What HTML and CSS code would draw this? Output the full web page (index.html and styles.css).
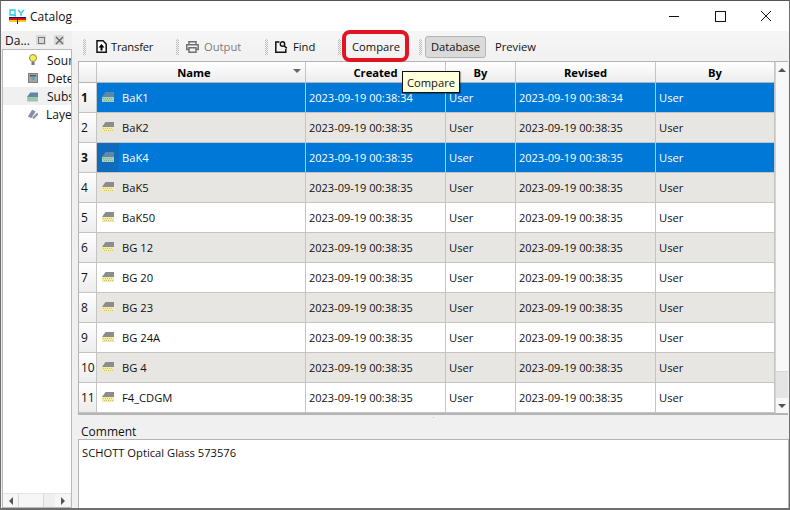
FILE: index.html
```html
<!DOCTYPE html>
<html lang="en">

<head>
    <meta charset="UTF-8">
    <meta name="viewport" content="width=device-width, initial-scale=1.0">
    <title>Catalog</title>
    <link rel="stylesheet" href="styles.css">
</head>

<body>
    <svg class="defs" width="0" height="0">
        <symbol id="glass" viewBox="0 0 12 11">
            <path d="M0 6l3.500-5h8.500v5z" fill="#8c8c8c" />
            <rect x="0" y="6" width="12" height="5" fill="#f3eda6" />
            <path d="M1 7.500h10M2 9.500h9" stroke="#c9c27a" stroke-dasharray="1 1" />
        </symbol>
        <symbol id="glass-sel" viewBox="0 0 12 11">
            <path d="M0 6l3.500-5h8.500v5z" fill="#5f87a6" />
            <rect x="0" y="6" width="12" height="5" fill="#a5cdb8" />
            <path d="M1 7.500h10M2 9.500h9" stroke="#7fae98" stroke-dasharray="1 1" />
        </symbol>
    </svg>

    <div class="window">
        <div class="titlebar">
            <svg class="app-icon" width="17" height="15" viewBox="0 0 17 15">
                <path d="M1 1h5v5H1zM5 6l2 1M9 1l3 3 3-3M12 4v3" fill="none" stroke="#25d0e6" stroke-width="1.400" />
                <rect x="0" y="8" width="17" height="1" fill="#10107a" />
                <rect x="0" y="9" width="17" height="2" fill="#e01010" />
                <rect x="0" y="11" width="17" height="2" fill="#f0d010" />
                <rect x="8" y="8" width="1" height="7" fill="#222" />
            </svg>
            <span class="title">Catalog</span>
            <div class="win-buttons">
                <svg width="46" height="30" viewBox="0 0 46 30"><path d="M18 15.500h10" stroke="#111" /></svg>
                <svg width="46" height="30" viewBox="0 0 46 30"><rect x="18.500" y="10.500" width="10" height="10" fill="none" stroke="#111" /></svg>
                <svg width="46" height="30" viewBox="0 0 46 30"><path d="M18 10l10 10M28 10L18 20" stroke="#111" /></svg>
            </div>
        </div>

        <div class="main">
            <div class="dock">
                <div class="dock-head">
                    <span>Da...</span>
                    <i class="dock-btn"><svg width="9" height="9" viewBox="0 0 9 9"><rect x="1.500" y="1.500" width="6" height="6" fill="none" stroke="#777" /></svg></i>
                    <i class="dock-btn"><svg width="9" height="9" viewBox="0 0 9 9"><path d="M1 1l7 7M8 1L1 8" stroke="#666" stroke-width="1.300" /></svg></i>
                </div>
                <div class="tree">
                    <div class="tree-list">
                        <div class="tree-item">
                            <svg width="12" height="14" viewBox="0 0 12 14"><circle cx="6" cy="5" r="3.500" fill="#f5ef5a" stroke="#8c8c50" /><rect x="4.500" y="9" width="3" height="3" fill="#777" /></svg>
                            <span>Sour</span>
                        </div>
                        <div class="tree-item">
                            <svg width="12" height="14" viewBox="0 0 12 14"><rect x="1.500" y="2.500" width="9" height="9" fill="#a4a4a4" stroke="#808080" /><rect x="3" y="4" width="6" height="1.500" fill="#555" /><circle cx="6" cy="7.500" r="1.800" fill="#4fa6c0" /></svg>
                            <span>Dete</span>
                        </div>
                        <div class="tree-item active">
                            <svg width="11" height="11"><use href="#glass-sel" /></svg>
                            <span>Subs</span>
                        </div>
                        <div class="tree-item layer">
                            <svg width="12" height="14" viewBox="0 0 14 14"><path d="M1 10l5-8 4 2-5 8z" fill="#8a8ab0" /><path d="M6 11l6-6 1 3-5 5z" fill="#999" /></svg>
                            <span>Laye</span>
                        </div>
                    </div>
                    <div class="hscroll">
                        <i class="arrow-left"></i>
                        <i class="hthumb"></i>
                        <i class="arrow-right"></i>
                    </div>
                </div>
            </div>

            <div class="content">
                <div class="toolbar">
                    <span class="grip"></span>
                    <div class="tool tool-transfer">
                        <svg width="11" height="13" viewBox="0 0 11 13"><path d="M1 .800h6l3.200 3.200v8.200H1z" fill="#fff" stroke="#111" stroke-width="1.500" /><path d="M5.500 4l3 3.500h-2v3h-2v-3h-2z" fill="#000" /></svg>
                        <span>Transfer</span>
                    </div>
                    <span class="grip"></span>
                    <div class="tool tool-output disabled">
                        <svg width="13" height="12" viewBox="0 0 13 12"><path d="M3 3.500V.800h7v2.700M3 8.500H.800V3.800h11.400v4.700H10M3 6.700h7v4.500H3z" fill="none" stroke="#707070" stroke-width="1.500" /></svg>
                        <span>Output</span>
                    </div>
                    <span class="grip"></span>
                    <div class="tool tool-find">
                        <svg width="13" height="12" viewBox="0 0 13 12"><path d="M4.500 1H.800v10.200h10V8" fill="none" stroke="#111" stroke-width="1.500" /><circle cx="7.500" cy="3" r="2.200" fill="none" stroke="#111" stroke-width="1.400" /><path d="M9.200 4.800l2.600 2.600" stroke="#111" stroke-width="1.500" /></svg>
                        <span>Find</span>
                    </div>
                    <span class="grip"></span>
                    <div class="tool tool-compare">Compare</div>
                    <span class="grip"></span>
                    <div class="tab checked">Database</div>
                    <div class="tab">Preview</div>
                </div>

                <div class="table-wrap">
                    <div class="table">
                        <div class="thead">
                            <div class="corner"></div>
                            <div class="th th-name">Name<i class="sort"></i></div>
                            <div class="th">Created</div>
                            <div class="th">By</div>
                            <div class="th">Revised</div>
                            <div class="th">By</div>
                        </div>
                        <div class="row selected">
                            <div class="num">1</div>
                            <div class="cell name"><svg width="12" height="11"><use href="#glass-sel" /></svg>BaK1</div>
                            <div class="cell date">2023-09-19 00:38:34</div>
                            <div class="cell">User</div>
                            <div class="cell date">2023-09-19 00:38:34</div>
                            <div class="cell">User</div>
                        </div>
                        <div class="row alt">
                            <div class="num">2</div>
                            <div class="cell name"><svg width="12" height="11"><use href="#glass" /></svg>BaK2</div>
                            <div class="cell date">2023-09-19 00:38:35</div>
                            <div class="cell">User</div>
                            <div class="cell date">2023-09-19 00:38:35</div>
                            <div class="cell">User</div>
                        </div>
                        <div class="row selected current">
                            <div class="num">3</div>
                            <div class="cell name"><svg width="12" height="11"><use href="#glass-sel" /></svg>BaK4</div>
                            <div class="cell date">2023-09-19 00:38:35</div>
                            <div class="cell">User</div>
                            <div class="cell date">2023-09-19 00:38:35</div>
                            <div class="cell">User</div>
                        </div>
                        <div class="row alt">
                            <div class="num">4</div>
                            <div class="cell name"><svg width="12" height="11"><use href="#glass" /></svg>BaK5</div>
                            <div class="cell date">2023-09-19 00:38:35</div>
                            <div class="cell">User</div>
                            <div class="cell date">2023-09-19 00:38:35</div>
                            <div class="cell">User</div>
                        </div>
                        <div class="row">
                            <div class="num">5</div>
                            <div class="cell name"><svg width="12" height="11"><use href="#glass" /></svg>BaK50</div>
                            <div class="cell date">2023-09-19 00:38:35</div>
                            <div class="cell">User</div>
                            <div class="cell date">2023-09-19 00:38:35</div>
                            <div class="cell">User</div>
                        </div>
                        <div class="row alt">
                            <div class="num">6</div>
                            <div class="cell name"><svg width="12" height="11"><use href="#glass" /></svg>BG 12</div>
                            <div class="cell date">2023-09-19 00:38:35</div>
                            <div class="cell">User</div>
                            <div class="cell date">2023-09-19 00:38:35</div>
                            <div class="cell">User</div>
                        </div>
                        <div class="row">
                            <div class="num">7</div>
                            <div class="cell name"><svg width="12" height="11"><use href="#glass" /></svg>BG 20</div>
                            <div class="cell date">2023-09-19 00:38:35</div>
                            <div class="cell">User</div>
                            <div class="cell date">2023-09-19 00:38:35</div>
                            <div class="cell">User</div>
                        </div>
                        <div class="row alt">
                            <div class="num">8</div>
                            <div class="cell name"><svg width="12" height="11"><use href="#glass" /></svg>BG 23</div>
                            <div class="cell date">2023-09-19 00:38:35</div>
                            <div class="cell">User</div>
                            <div class="cell date">2023-09-19 00:38:35</div>
                            <div class="cell">User</div>
                        </div>
                        <div class="row">
                            <div class="num">9</div>
                            <div class="cell name"><svg width="12" height="11"><use href="#glass" /></svg>BG 24A</div>
                            <div class="cell date">2023-09-19 00:38:35</div>
                            <div class="cell">User</div>
                            <div class="cell date">2023-09-19 00:38:35</div>
                            <div class="cell">User</div>
                        </div>
                        <div class="row alt">
                            <div class="num">10</div>
                            <div class="cell name"><svg width="12" height="11"><use href="#glass" /></svg>BG 4</div>
                            <div class="cell date">2023-09-19 00:38:35</div>
                            <div class="cell">User</div>
                            <div class="cell date">2023-09-19 00:38:35</div>
                            <div class="cell">User</div>
                        </div>
                        <div class="row">
                            <div class="num">11</div>
                            <div class="cell name"><svg width="12" height="11"><use href="#glass" /></svg>F4_CDGM</div>
                            <div class="cell date">2023-09-19 00:38:35</div>
                            <div class="cell">User</div>
                            <div class="cell date">2023-09-19 00:38:35</div>
                            <div class="cell">User</div>
                        </div>
                    </div>
                    <div class="vscroll">
                        <i class="arrow-btn"><b class="arrow-up"></b></i>
                        <i class="vthumb"></i>
                        <i class="arrow-btn"><b class="arrow-down"></b></i>
                    </div>
                </div>

                <div class="splitter"></div>

                <div class="comment-label">Comment</div>
                <div class="comment-box">SCHOTT Optical Glass 573576</div>
            </div>
        </div>

        <div class="highlight"></div>
        <div class="tooltip">Compare</div>
    </div>
</body>

</html>
```
FILE: styles.css
```css
* {
    box-sizing: border-box;
}

html,
body {
    margin: 0;
    height: 100%;
    overflow: hidden;
}

body {
    font-family: 'Open Sans', 'Noto Sans', sans-serif;
    font-size: 11.2px;
    color: #111;
}

.defs {
    position: absolute;
}

.window {
    position: relative;
    width: 790px;
    height: 510px;
    background: #f0f0f0;
    border: 1px solid #6e6e6e;
    border-top-color: #555;
    border-bottom-width: 2px;
    display: flex;
    flex-direction: column;
}

/* Title bar */
.titlebar {
    height: 30px;
    flex: none;
    background: #fff;
    display: flex;
    align-items: center;
    padding-left: 8px;
}

.app-icon {
    margin-right: 4px;
}

.title {
    font-size: 12px;
}

.win-buttons {
    margin-left: auto;
    display: flex;
}

.main {
    flex: 1;
    display: flex;
    min-height: 0;
}

/* Left dock */
.dock {
    width: 71px;
    flex: none;
    display: flex;
    flex-direction: column;
}

.dock-head {
    height: 18px;
    display: flex;
    align-items: center;
    padding-left: 4px;
    font-size: 12px;
}

.dock-head span {
    width: 32px;
}

.dock-btn {
    width: 10px;
    height: 10px;
    margin-right: 8px;
    background: #d9d9d9;
    display: flex;
    align-items: center;
    justify-content: center;
}

.tree {
    flex: 1;
    margin-left: 1px;
    background: #fff;
    border: 1px solid #b9b9b9;
    display: flex;
    flex-direction: column;
    font-size: 12px;
}

.tree-list {
    flex: 1;
    padding-top: 1px;
    overflow: hidden;
}

.tree-item {
    height: 18px;
    display: flex;
    align-items: center;
    padding-left: 24px;
    gap: 8px;
    white-space: nowrap;
}

.tree-item svg {
    flex: none;
}

.tree-item.active {
    background: #f0f0f0;
    gap: 9px;
}

.tree-item.layer {
    gap: 7px;
}

.hscroll {
    height: 14px;
    display: flex;
    background: #efefef;
    border-top: 1px solid #e4e4e4;
}

.hscroll i {
    display: block;
}

.arrow-left,
.arrow-right {
    width: 15px;
    height: 13px;
    position: relative;
    background: #f6f6f6;
}

.arrow-left::after,
.arrow-right::after {
    content: "";
    position: absolute;
    top: 3px;
    border: 4px solid transparent;
}

.arrow-left::after {
    left: 2px;
    border-right-color: #555;
}

.arrow-right::after {
    left: 6px;
    border-left-color: #555;
}

.hthumb {
    width: 26px;
    background: #f6f6f6;
    border-right: 1px solid #d8d8d8;
    border-left: 1px solid #d8d8d8;
    margin-right: 11px;
}

/* Right side */
.content {
    flex: 1;
    min-width: 0;
    display: flex;
    flex-direction: column;
    background: #f0f0f0;
    padding-left: 6px;
}

.toolbar {
    height: 30px;
    margin-left: -6px;
    display: flex;
    align-items: center;
    background: linear-gradient(#f6f6f6, #f1f1f1);
    padding: 1px 0 0 11px;
}

.grip {
    width: 3px;
    height: 16px;
    flex: none;
    background: repeating-conic-gradient(#bdbdbd 0 25%, transparent 0 50%) 0 0 / 2px 2px;
}

.tool {
    display: flex;
    align-items: center;
    height: 24px;
    padding-left: 7px;
    white-space: nowrap;
    flex: none;
}

.tool svg {
    margin-right: 5px;
}

.tool.disabled {
    color: #7d7d7d;
}

.tool-transfer {
    width: 90px;
    padding-left: 10px;
    letter-spacing: -0.2px;
}

.tool-transfer svg {
    margin-right: 4px;
}

.tool-output {
    width: 86px;
}

.tool-find {
    width: 70px;
}

.tool-compare {
    width: 78px;
    padding-left: 11px;
}

.tab {
    height: 22px;
    display: flex;
    align-items: center;
    padding: 0 6px;
    margin-left: 2px;
    border: 1px solid transparent;
    border-radius: 3px;
}

.tab.checked {
    width: 61px;
    justify-content: center;
    background: #dadada;
    border-color: #b5b5b5;
    margin-left: 3px;
}

/* Table */
.table-wrap {
    height: 354px;
    flex: none;
    display: flex;
    background: #fff;
    border-top: 1px solid #b4b4b4;
    border-left: 1px solid #b4b4b4;
    border-bottom: 2px solid #b4b4b4;
    margin-right: 1px;
}

.table {
    width: 696px;
    flex: none;
    overflow: hidden;
}

.thead,
.row {
    display: grid;
    grid-template-columns: 18px 209px 140px 70px 140px 119px;
}

.thead {
    height: 21px;
    background: linear-gradient(#fff, #ececec);
    border-bottom: 1px solid #b4b4b4;
}

.corner {
    border-right: 1px solid #c4c4c4;
}

.th {
    position: relative;
    display: flex;
    align-items: center;
    justify-content: center;
    font-weight: 700;
    color: #000;
    padding-top: 1px;
    border-right: 1px solid #c4c4c4;
}

.th-name {
    padding-right: 14px;
}

.sort {
    position: absolute;
    right: 4px;
    top: 7px;
    border: 4px solid transparent;
    border-top-color: #666;
}

.row {
    height: 30px;
    background: #fff;
    border-bottom: 1px solid #c4c4c4;
}

.row.alt {
    background: #e8e6e3;
}

.row.selected {
    background: #0078d7;
    color: #fff;
}

.num {
    display: flex;
    align-items: center;
    padding-left: 2px;
    font-size: 12px;
    background: linear-gradient(#fff, #ececec);
    color: #111;
    border-right: 1px solid #c4c4c4;
}

.row.selected .num {
    font-weight: 700;
}

.cell {
    display: flex;
    align-items: center;
    padding-left: 3px;
    border-right: 1px solid #c4c4c4;
    white-space: nowrap;
}

.cell.date {
    font-size: 11px;
}

.cell.name {
    padding-left: 5px;
}

.cell.name svg {
    margin-right: 8px;
    margin-top: -3px;
}

.row.current .cell.name {
    background: linear-gradient(90deg, #0f6cbd 22px, #0078d7 22px);
}

.vscroll {
    flex: 1;
    display: flex;
    flex-direction: column;
    background: #e4e4e4;
    border-left: 1px solid #d4d4d4;
}

.vscroll i {
    display: block;
}

.arrow-btn {
    height: 15px;
    flex: none;
    display: flex !important;
    align-items: center;
    justify-content: center;
    background: #f8f8f8;
}

.arrow-up,
.arrow-down {
    border: 4px solid transparent;
}

.arrow-up {
    border-bottom-color: #555;
    margin-top: -4px;
}

.arrow-down {
    border-top-color: #555;
    margin-top: 4px;
}

.vthumb {
    height: 295px;
    background: #f8f8f8;
    border-bottom: 1px solid #d8d8d8;
    margin-bottom: auto;
}

.splitter {
    height: 10px;
    flex: none;
    background: radial-gradient(#c4c4c4 40%, transparent 45%) center 1px / 3px 3px no-repeat;
}

.comment-label {
    height: 13px;
    line-height: 13px;
    padding-left: 3px;
    font-size: 12px;
    flex: none;
}

.comment-box {
    flex: 1;
    margin-top: 1px;
    background: #fff;
    border: 1px solid #b4b4b4;
    border-bottom: none;
    padding: 5px 3px;
}

/* Overlays */
.highlight {
    position: absolute;
    left: 341px;
    top: 29px;
    width: 67px;
    height: 32px;
    border: 4px solid #e3141f;
    border-radius: 8px;
}

.tooltip {
    position: absolute;
    left: 401px;
    top: 70px;
    width: 58px;
    height: 22px;
    background: #ffffdc;
    border: 1px solid #111;
    box-shadow: 1px 1px 1px rgba(0, 0, 0, 0.3);
    display: flex;
    align-items: center;
    justify-content: center;
}
```
